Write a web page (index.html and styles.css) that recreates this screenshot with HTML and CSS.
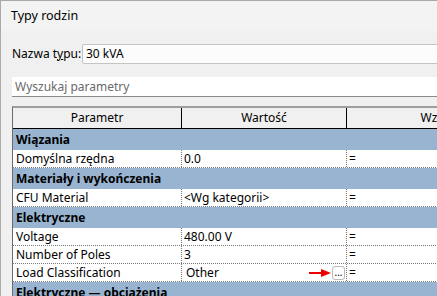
FILE: index.html
```html
<!DOCTYPE html>
<html lang="pl">
<head>
    <meta charset="utf-8">
    <title>Typy rodzin</title>
    <link rel="stylesheet" href="styles.css">
</head>
<body>
    <div class="window">
        <div class="titlebar">Typy rodzin</div>

        <div class="content">
            <div class="type-row">
                <label for="typ">Nazwa t<u>y</u>pu:</label>
                <div class="type-box" id="typ">30 kVA</div>
            </div>

            <div class="search">Wyszukaj parametry</div>

            <div class="grid">
                <div class="row head">
                    <div class="cell">Parametr</div>
                    <div class="cell">Wartość</div>
                    <div class="cell">Wzór</div>
                </div>

                <div class="row group">Wiązania</div>
                <div class="row">
                    <div class="cell">Domyślna rzędna</div>
                    <div class="cell">0.0</div>
                    <div class="cell">=</div>
                </div>

                <div class="row group">Materiały i wykończenia</div>
                <div class="row">
                    <div class="cell">CFU Material</div>
                    <div class="cell">&lt;Wg kategorii&gt;</div>
                    <div class="cell">=</div>
                </div>

                <div class="row group">Elektryczne</div>
                <div class="row">
                    <div class="cell">Voltage</div>
                    <div class="cell">480.00 V</div>
                    <div class="cell">=</div>
                </div>
                <div class="row">
                    <div class="cell">Number of Poles</div>
                    <div class="cell">3</div>
                    <div class="cell">=</div>
                </div>
                <div class="row">
                    <div class="cell">Load Classification</div>
                    <div class="cell pick">
                        <span class="pick-text">Other</span>
                        <svg class="arrow" width="22" height="8" viewBox="0 0 22 8">
                            <line x1="0" y1="4" x2="14" y2="4" stroke="#ee0000" stroke-width="2"/>
                            <polygon points="12,0 22,4 12,8" fill="#ee0000"/>
                        </svg>
                        <span class="dots">...</span>
                    </div>
                    <div class="cell">=</div>
                </div>

                <div class="row group">Elektryczne — obciążenia</div>
            </div>
        </div>
    </div>
</body>
</html>
```

FILE: styles.css
```css
* {
    box-sizing: border-box;
    margin: 0;
    padding: 0;
}

body {
    width: 437px;
    height: 296px;
    overflow: hidden;
    background: #f0f0f0;
    font-family: "Noto Sans", "Liberation Sans", sans-serif;
    font-size: 12px;
    color: #000;
}

.window {
    width: 600px;
    height: 296px;
    border-top: 1px solid #a9a9a9;
    border-left: 1px solid #a9a9a9;
}

.titlebar {
    height: 30px;
    background: #f3f3f3;
    padding: 7px 0 0 10px;
    font-size: 12.5px;
    line-height: 16px;
}

.content {
    padding: 13px 0 0 11px;
}

.type-row {
    display: flex;
    align-items: center;
    height: 20px;
}

.type-row label {
    width: 70px;
    line-height: 20px;
}

.type-row u {
    text-decoration-thickness: 1px;
}

.type-box {
    flex: 1;
    height: 20px;
    background: #fcfcfc;
    border: 1px solid #c4c4c4;
    border-radius: 2px;
    padding-left: 3px;
    line-height: 18px;
}

.search {
    margin-top: 13px;
    height: 20px;
    background: #fff;
    border-bottom: 1px solid #8a8a8a;
    padding-left: 3px;
    line-height: 19px;
    color: #6a6a6a;
}

.grid {
    margin-top: 9px;
    border-top: 2px solid #9e9e9e;
    border-left: 1px solid #6b6b6b;
}

.row {
    display: flex;
    height: 18px;
    background: #fff;
    border-bottom: 1px dotted #7a7a7a;
    line-height: 17px;
}

.cell {
    padding-left: 3px;
    white-space: nowrap;
    overflow: hidden;
}

.cell:nth-child(1) {
    width: 169px;
    border-right: 1px dotted #7a7a7a;
}

.cell:nth-child(2) {
    width: 165px;
    border-right: 1px dotted #7a7a7a;
    padding-left: 2px;
}

.cell:nth-child(3) {
    flex: 1;
    padding-left: 2px;
}

.row.head {
    height: 21px;
    background: #f0f0f0;
    border-bottom: 1px solid #000;
    line-height: 20px;
}

.row.head .cell {
    text-align: center;
    padding-left: 0;
}

.row.head .cell:nth-child(1),
.row.head .cell:nth-child(2) {
    border-right: 1px solid #000;
}

.row.head .cell:nth-child(3) {
    flex: none;
    width: 176px;
}

.row.group {
    height: 21px;
    background: #99b4d1;
    border-bottom: none;
    font-weight: 700;
    padding-left: 3px;
    line-height: 21px;
}

.pick {
    display: flex;
    align-items: center;
}

.pick-text {
    padding-left: 2px;
    flex: 1;
}

.arrow {
    margin-right: 1px;
}

.dots {
    width: 13px;
    height: 14px;
    border: 1px solid #b9b9b9;
    border-radius: 3px;
    background: #fff;
    font-size: 10px;
    line-height: 10px;
    text-align: center;
    margin-right: 1px;
}
```
